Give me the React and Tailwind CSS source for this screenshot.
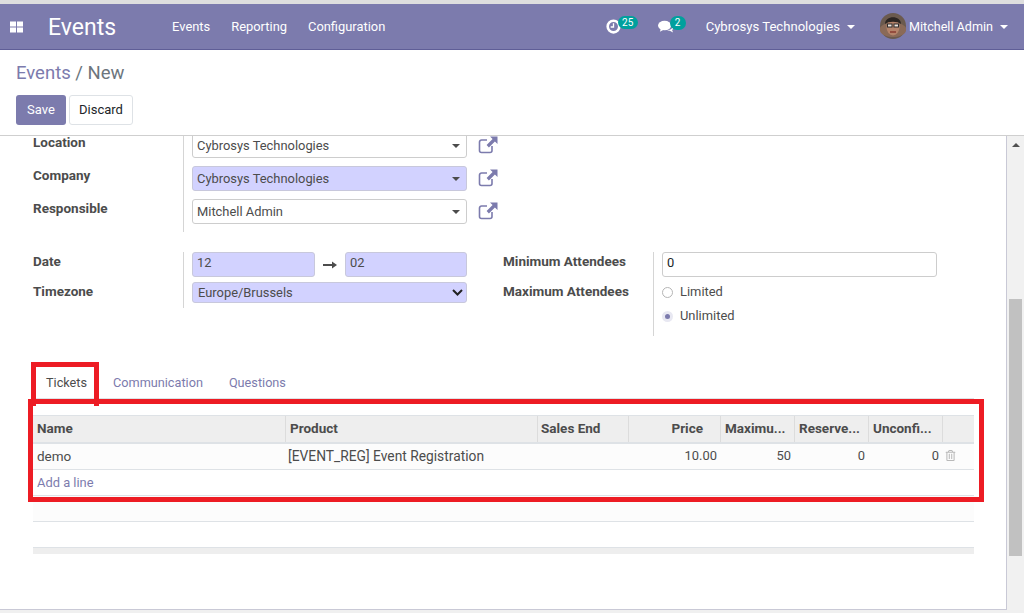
import { FaRegTrashAlt } from "react-icons/fa";

const FONT = "font-['Roboto','Liberation_Sans',sans-serif]";

function ExternalLink() {
  return (
    <svg width="20" height="18" viewBox="0 0 20 18" className="ml-[11px] mt-[-2px] shrink-0 text-[#7c7bad]" fill="none">
      <path d="M14 10v4.500a2 2 0 0 1-2 2H3.500a2 2 0 0 1-2-2V6a2 2 0 0 1 2-2H9" stroke="currentColor" strokeWidth="1.600" />
      <path d="M12 0.500h7.500V8l-2.600-2.600-6 6-2.300-2.300 6-6z" fill="currentColor" />
    </svg>
  );
}

function Field({ value, filled }) {
  return (
    <div className="flex items-center w-[411px]">
      <div className={`flex items-center justify-between w-[275px] h-[25px] border rounded-[3px] pl-[4px] pr-[5px] ${filled ? "bg-[#d2d2ff] border-[#c8c8dc]" : "bg-white border-[#cdcdcd]"}`}>
        <span>{value}</span>
        <span className="w-0 h-0 mr-[1px] border-x-[4px] border-x-transparent border-t-[4px] border-t-[#4c4c4c]" />
      </div>
      <ExternalLink />
    </div>
  );
}

function Label({ children }) {
  return <div className="font-bold text-[13.5px] text-[#4c4c4c]">{children}</div>;
}

const columns = [
  { name: "Name", width: "w-[253px]" },
  { name: "Product", width: "w-[252px]" },
  { name: "Sales End", width: "w-[91px]", pad: "pl-[3px]" },
  { name: "Price", width: "w-[92px]", right: true },
  { name: "Maximu...", width: "w-[74px]" },
  { name: "Reserve...", width: "w-[74px]" },
  { name: "Unconfi...", width: "w-[74px]" },
  { name: "", width: "flex-1" },
];

const cells = [
  { text: "demo", width: "w-[253px]", size: "text-[13.5px] pl-[4px]" },
  { text: "[EVENT_REG] Event Registration", width: "w-[252px]", size: "text-[13.8px] pl-[2px]" },
  { text: "", width: "w-[91px]" },
  { text: "10.00", width: "w-[92px]", right: true },
  { text: "50", width: "w-[74px]", right: true },
  { text: "0", width: "w-[74px]", right: true },
  { text: "0", width: "w-[74px]", right: true },
];

export default function App() {
  return (
    <div className={`${FONT} relative h-[613px] w-[1024px] overflow-hidden bg-[#f0f0f0] text-[12.9px] leading-[20px] text-[#4c4c4c]`}>
      <div className="h-[4px] bg-[#dedede]" />
      <nav className="flex items-center h-[46px] bg-[#7c7bad] border-b border-[#5f5e97] text-white">
        <svg width="13" height="12" viewBox="0 0 13 12" className="ml-[10px]" fill="currentColor">
          <rect x="0" y="0.500" width="6" height="5" />
          <rect x="7" y="0.500" width="6" height="5" />
          <rect x="0" y="6.500" width="6" height="5" />
          <rect x="7" y="6.500" width="6" height="5" />
        </svg>
        <span className="ml-[25px] text-[23px] leading-none mt-[1px]">Events</span>
        <div className="flex gap-[21px] ml-[56px]">
          <span>Events</span>
          <span>Reporting</span>
          <span>Configuration</span>
        </div>
        <div className="ml-auto flex items-center mr-[16px]">
          <div className="relative flex items-center w-[52px] mt-[-1px]">
            <svg width="15" height="15" viewBox="0 0 16 16" fill="none" stroke="currentColor">
              <circle cx="8" cy="8" r="6.200" strokeWidth="2.800" />
              <path d="M8 4.500V8.500H5" strokeWidth="1.400" />
            </svg>
            <span className="absolute left-[12px] top-[-3px] h-[13px] w-[20px] rounded-full bg-[#00a09d] text-center text-[10px] leading-[13px]">25</span>
          </div>
          <div className="relative flex items-center w-[48px] mt-[-1px]">
            <svg width="16" height="15" viewBox="0 0 17 15" fill="currentColor">
              <ellipse cx="7" cy="6.500" rx="7" ry="5" />
              <path d="M3 10l-1 3 4-2z" />
              <path d="M15.500 7.500c1 2 .5 3-.5 4l1 2.500-3.500-2-3-.2c3-.4 6-2 6-4.300z" />
            </svg>
            <span className="absolute left-[12px] top-[-3px] h-[14px] w-[16px] rounded-full bg-[#00a09d] text-center text-[10px] leading-[14px]">2</span>
          </div>
          <span className="text-[13.100px]">Cybrosys Technologies</span>
          <span className="ml-[7px] w-0 h-0 border-x-[4px] border-x-transparent border-t-[4px] border-t-white" />
          <svg width="26" height="26" viewBox="0 0 26 26" className="ml-[25px] mt-[-1px]">
            <circle cx="13" cy="13" r="13" fill="#6b5a4e" />
            <path d="M0 15C3 8 23 8 26 15v3C23 26 3 26 0 18z" fill="#8a6a58" />
            <ellipse cx="13" cy="14" rx="6.500" ry="8.500" fill="#b5836a" />
            <path d="M5 11C5 2 21 2 21 11c-3-3-13-3-16 0z" fill="#2c2522" />
            <rect x="7.500" y="11" width="4.500" height="3" fill="#efe4dc" stroke="#2b2b2b" />
            <rect x="14" y="11" width="4.500" height="3" fill="#efe4dc" stroke="#2b2b2b" />
            <path d="M10 19h6" stroke="#8a3a30" strokeWidth="1.500" />
          </svg>
          <span className="ml-[3px] text-[12.600px]">Mitchell Admin</span>
          <span className="ml-[7px] w-0 h-0 border-x-[4px] border-x-transparent border-t-[4px] border-t-white" />
        </div>
      </nav>

      <div className="h-[86px] border-b border-[#cfcfcf] bg-white pl-[16px] pt-[12px]">
        <div className="text-[18.500px] leading-[22px] text-[#7c7bad]">
          Events <span className="text-[#6c757d]">/ New</span>
        </div>
        <div className="flex gap-[3px] mt-[11px] text-[13px]">
          <button className="h-[30px] w-[50px] rounded-[3px] bg-[#7c7bad] text-white">Save</button>
          <button className="h-[30px] w-[64px] rounded-[3px] border border-[#dee2e6] bg-white text-[#212529]">Discard</button>
        </div>
      </div>

      <div className="flex h-[474px]">
        <main className="w-[1007px] bg-white border-r border-b border-[#c9c9d6] overflow-hidden pl-[33px] pr-[33px]">
          <div className="flex mt-[-3px]">
            <div className="flex flex-col gap-[13px] w-[150px] mt-[-1px]">
              <Label>Location</Label>
              <Label>Company</Label>
              <Label>Responsible</Label>
            </div>
            <div className="flex flex-col gap-[8px] border-l border-[#d5d5d5] pl-[8px] w-[430px] h-[99px]">
              <Field value="Cybrosys Technologies" />
              <Field value="Cybrosys Technologies" filled />
              <Field value="Mitchell Admin" />
            </div>
          </div>

          <div className="flex mt-[20px]">
            <div className="flex flex-col gap-[10px] w-[150px] mt-[-1px]">
              <Label>Date</Label>
              <Label>Timezone</Label>
            </div>
            <div className="flex flex-col gap-[5px] w-[320px] h-[56px] border-l border-[#d5d5d5] pl-[8px]">
              <div className="flex items-center w-[275px]">
                <div className="w-[123px] h-[25px] rounded-[3px] bg-[#d2d2ff] border border-[#c8c8dc] pl-[4px]">12</div>
                <svg width="14" height="8" viewBox="0 0 14 8" className="mx-auto text-[#4c4c4c]" fill="currentColor">
                  <rect x="0" y="3" width="10" height="2" />
                  <path d="M9 0.500 14 4 9 7.500z" />
                </svg>
                <div className="w-[122px] h-[25px] rounded-[3px] bg-[#d2d2ff] border border-[#c8c8dc] pl-[4px]">02</div>
              </div>
              <div className="flex items-center justify-between w-[275px] h-[21px] rounded-[3px] bg-[#d2d2ff] border border-[#c8c8dc] pl-[5px] pr-[3px]">
                <span>Europe/Brussels</span>
                <svg width="11" height="7" viewBox="0 0 11 7" fill="none" stroke="#222" strokeWidth="2"><path d="M1 1l4.500 4.500L10 1" /></svg>
              </div>
            </div>
            <div className="flex flex-col gap-[10px] w-[150px] mt-[-1px]">
              <Label>Minimum Attendees</Label>
              <Label>Maximum Attendees</Label>
            </div>
            <div className="h-[84px] border-l border-[#d5d5d5] pl-[8px]">
              <div className="w-[275px] h-[25px] rounded-[3px] border border-[#cdcdcd] pl-[4px] text-[#212529]">0</div>
              <div className="flex items-center gap-[7px] mt-[5px]">
                <span className="w-[11px] h-[11px] rounded-full border border-[#b5b5b5] bg-white" />
                <span>Limited</span>
              </div>
              <div className="flex items-center gap-[7px] mt-[4px]">
                <span className="flex items-center justify-center w-[11px] h-[11px] rounded-full bg-[#e8e8f2]">
                  <span className="w-[5px] h-[5px] rounded-full bg-[#7c7bad]" />
                </span>
                <span>Unlimited</span>
              </div>
            </div>
          </div>

          <div className="flex mt-[26px] h-[37px] border-b border-[#dee2e6] w-[941px] text-[12.700px]">
            <div className="flex items-center pt-[5px] px-[13px] text-[#4c4c4c]">Tickets</div>
            <div className="flex items-center pt-[5px] px-[13px] text-[#7c7bad]">Communication</div>
            <div className="flex items-center pt-[5px] px-[13px] text-[#7c7bad]">Questions</div>
          </div>

          <div className="w-[941px] mt-[16px]">
            <div className="flex h-[27px] items-center bg-[#eeeeee] border-t border-[#dee2e6] font-bold text-[13.5px]">
              {columns.map((col, i) => (
                <div key={i} className={`${col.width} ${col.right ? "text-right pr-[17px]" : ""} ${col.pad || "pl-[4px]"} h-full pt-[2px] border-r border-[#dcdcdc] last:border-r-0 whitespace-nowrap`}>
                  {col.name}
                </div>
              ))}
            </div>
            <div className="h-[2px] bg-[#dee2e6]" />
            <div className="flex h-[26px] items-center bg-[#fcfcfc] border-b border-[#dee2e6] pb-[2px]">
              {cells.map((cell, i) => (
                <div key={i} className={`${cell.width} ${cell.size || ""} ${cell.right ? "text-right pr-[4px]" : ""} whitespace-nowrap`}>
                  {cell.text}
                </div>
              ))}
              <FaRegTrashAlt className="ml-[2px] text-[11px] text-[#b9b9b9]" />
            </div>
            <div className="h-[26px] border-b border-[#dee2e6] pl-[4px] leading-[25px] text-[#7c7bad]">Add a line</div>
            <div className="h-[26px] border-b border-[#dee2e6] bg-[#fcfcfc]" />
            <div className="h-[26px] border-b border-[#dee2e6]" />
            <div className="h-[6px] bg-[#eeeeee]" />
          </div>
        </main>

        <div className="flex flex-col flex-1 bg-[#f1f1f1]">
          <div className="flex items-center justify-center h-[17px]">
            <span className="w-0 h-0 border-x-[4px] border-x-transparent border-b-[4px] border-b-[#505050]" />
          </div>
          <div className="mt-[146px] h-[257px] mx-[2px] bg-[#c1c1c1]" />
        </div>
      </div>

      {/* annotation boxes drawn on top of the screenshot */}
      <div className="absolute left-[31px] top-[362px] w-[68px] h-[44px] border-[5px] border-[#ed1c24] border-b-0" />
      <div className="absolute left-[28px] top-[399px] w-[956px] h-[103px] border-[5px] border-[#ed1c24]" />
    </div>
  );
}
